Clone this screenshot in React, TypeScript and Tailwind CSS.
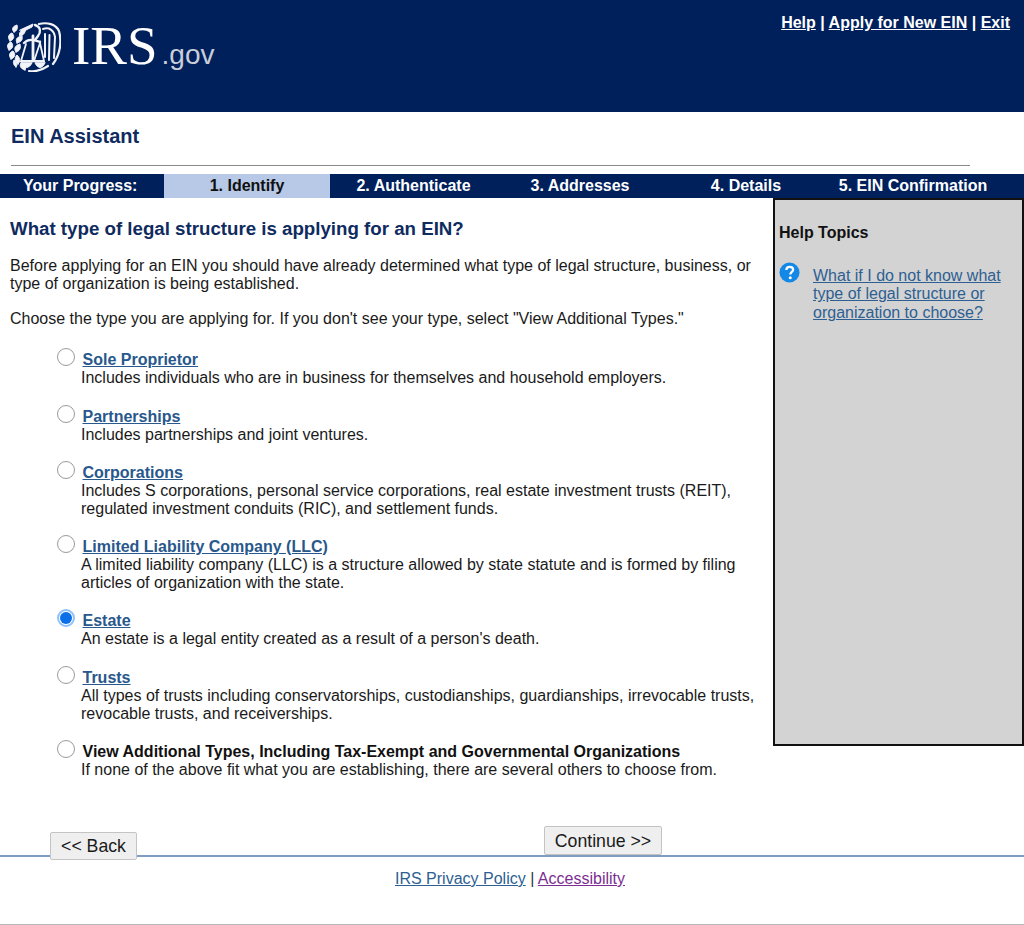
const font = 'font-["Liberation_Sans",Arial,sans-serif]';

type Option = {
  label: string;
  link?: boolean;
  checked?: boolean;
  lines: string[];
  className: string;
};

const options: Option[] = [
  {
    label: 'Sole Proprietor',
    link: true,
    lines: ['Includes individuals who are in business for themselves and household employers.'],
    className: 'mt-[23px]',
  },
  {
    label: 'Partnerships',
    link: true,
    lines: ['Includes partnerships and joint ventures.'],
    className: 'mt-[21px]',
  },
  {
    label: 'Corporations',
    link: true,
    lines: [
      'Includes S corporations, personal service corporations, real estate investment trusts (REIT),',
      'regulated investment conduits (RIC), and settlement funds.',
    ],
    className: 'mt-[20px]',
  },
  {
    label: 'Limited Liability Company (LLC)',
    link: true,
    lines: [
      'A limited liability company (LLC) is a structure allowed by state statute and is formed by filing',
      'articles of organization with the state.',
    ],
    className: 'mt-[20px]',
  },
  {
    label: 'Estate',
    link: true,
    checked: true,
    lines: ["An estate is a legal entity created as a result of a person's death."],
    className: 'mt-[20px]',
  },
  {
    label: 'Trusts',
    link: true,
    lines: [
      'All types of trusts including conservatorships, custodianships, guardianships, irrevocable trusts,',
      'revocable trusts, and receiverships.',
    ],
    className: 'mt-[21px]',
  },
  {
    label: 'View Additional Types, Including Tax-Exempt and Governmental Organizations',
    lines: ['If none of the above fit what you are establishing, there are several others to choose from.'],
    className: 'mt-[20px]',
  },
];

const Seal = () => (
  <svg viewBox="0 0 54 50" className="w-[54px] h-[50px] shrink-0" fill="#f1f3f8" stroke="#f1f3f8" strokeLinecap="round">
    {/* wreath */}
    <path d="M13 8 L26 2 L25 5 L15 10Z" strokeWidth="1" />
    <path d="M7 10 C4 7 6 4 10 3 C11 6 10 9 7 10Z" strokeWidth="1" />
    <path d="M13 14 C11 11 14 8 19 7 C18 11 16 14 13 14Z" strokeWidth="1" />
    <path d="M3 19 C0 15 2 12 5 11 C8 14 7 18 3 19Z" strokeWidth="1" />
    <path d="M10 21 C8 17 10 15 15 14 C16 18 14 20 10 21Z" strokeWidth="1" />
    <path d="M2 28 C-1 24 1 21 4 20 C7 23 6 27 2 28Z" strokeWidth="1" />
    <path d="M9 30 C6 26 9 23 13 22 C14 26 13 29 9 30Z" strokeWidth="1" />
    <path d="M4 37 C1 33 3 30 6 29 C9 32 8 36 4 37Z" strokeWidth="1" />
    <path d="M11 42 C8 40 7 36 10 33 C13 36 14 39 11 42Z" strokeWidth="1" />
    <path d="M9 45 C6 43 6 40 7 38 C10 40 11 43 9 45Z" strokeWidth="1" />
    <path d="M18 48 C14 47 12 44 14 41 C18 42 20 45 18 48Z" strokeWidth="1" />
    {/* eagle wing */}
    <g fill="none">
      <path d="M32 2 C40 0 49 2 52 9 C55 20 53 33 46 42" strokeWidth="2.2" />
      <path d="M36 7 C42 5 47 8 48 15 L47 36" strokeWidth="2" />
      <path d="M42.500 13 L42 38" strokeWidth="2" />
      <path d="M38 12 L38 35" strokeWidth="2" />
      {/* eagle head and beam */}
      <path d="M28 3 C34 5 34 10 31 14 L28 18" strokeWidth="2.4" />
      <path d="M17 21 C22 16 27 18 33 20" strokeWidth="2.4" />
      <path d="M26 14 L26 39" strokeWidth="2.8" />
      {/* scales */}
      <path d="M19 22 L14 39 H25" strokeWidth="1.8" />
      <path d="M33 21 L37 39 H27 L33 21Z" strokeWidth="1.8" />
      <path d="M22 49 C28 50 35 48 41 44" strokeWidth="2.2" />
    </g>
    <path d="M14 41 C17 47 22 47 25 41Z" strokeWidth="1" />
    <path d="M28 41 C31 47 35 47 38 41Z" strokeWidth="1" />
  </svg>
);

const Radio = ({ checked }: { checked?: boolean }) =>
  checked ? (
    <span className="block w-[18px] h-[18px] rounded-full border-2 border-[#8fc1fb] bg-white p-[1px] shrink-0">
      <span className="block w-full h-full rounded-full bg-[#0a6fe8]" />
    </span>
  ) : (
    <span className="block w-[18px] h-[18px] rounded-full border border-[#9a9a9a] bg-white shrink-0" />
  );

const steps = [
  { label: '1. Identify', className: 'w-[166px] bg-[#b7c9e6] text-[#101010]' },
  { label: '2. Authenticate', className: 'w-[167px] text-white' },
  { label: '3. Addresses', className: 'w-[166px] text-white' },
  { label: '4. Details', className: 'w-[166px] text-white' },
  { label: '5. EIN Confirmation', className: 'w-[168px] text-white whitespace-nowrap' },
];

const App = () => {
  return (
    <div className={`w-[1024px] h-[925px] overflow-hidden bg-white text-[#1a1a1a] text-[16px] leading-[18px] ${font}`}>
      <header className="h-[112px] bg-[#00205c] flex justify-between items-start">
        <div className="flex items-start pl-[7px] pt-[22px]">
          <Seal />
          <span className='ml-[11px] mt-[-6px] text-[55px] leading-[60px] text-white font-["Liberation_Serif",serif]'>IRS</span>
          <span className="ml-[4px] mt-[15px] text-[28px] leading-[36px] text-[#c9ced8]">.gov</span>
        </div>
        <div className="pt-[14px] pr-[14px] text-[16px] font-bold text-white">
          <a href="#" className="underline">Help</a> | <a href="#" className="underline">Apply for New EIN</a> | <a href="#" className="underline">Exit</a>
        </div>
      </header>

      <div className="h-[62px] pl-[11px] pt-[13px]">
        <h1 className="text-[20px] leading-[23px] font-bold text-[#0f2b60]">EIN Assistant</h1>
        <div className="mt-[17px] w-[959px] border-t border-[#8a8a8a]" />
      </div>

      <nav className="h-[24px] bg-[#00205c] flex text-[16px] leading-[24px] font-bold">
        <div className="w-[164px] pl-[23px] text-white">Your Progress:</div>
        {steps.map((step) => (
          <div key={step.label} className={`text-center ${step.className}`}>{step.label}</div>
        ))}
      </nav>

      <div className="flex items-start h-[628px]">
        <main className="w-[773px] pl-[10px]">
          <h2 className="mt-[20px] text-[18.7px] leading-[22px] font-bold text-[#0f2b60]">What type of legal structure is applying for an EIN?</h2>
          <p className="mt-[17px]">
            Before applying for an EIN you should have already determined what type of legal structure, business, or<br />
            type of organization is being established.
          </p>
          <p className="mt-[17px]">Choose the type you are applying for. If you don't see your type, select "View Additional Types."</p>
          {options.map((option) => (
            <div key={option.label} className={`flex pl-[47px] ${option.className}`}>
              <div className="w-[24px] mt-[-3px]"><Radio checked={option.checked} /></div>
              <div>
                <div className="pl-[1.5px] text-[16px]">
                  {option.link ? (
                    <a href="#" className="font-bold text-[#28588c] underline">{option.label}</a>
                  ) : (
                    <span className="font-bold text-[#111]">{option.label}</span>
                  )}
                </div>
                {option.lines.map((line) => (
                  <div key={line} className="whitespace-nowrap">{line}</div>
                ))}
              </div>
            </div>
          ))}
        </main>
        <aside className="w-[251px] h-[548px] bg-[#d3d3d3] border-2 border-[#111] pl-[4px] pt-[23px]">
          <h3 className="text-[16px] leading-[20px] font-bold text-[#111]">Help Topics</h3>
          <div className="mt-[19px] flex">
            <svg viewBox="0 0 22 22" className="w-[21px] h-[21px] shrink-0">
              <circle cx="11" cy="11" r="10.5" fill="#1488e6" />
              <path d="M7.6 8.4 C7.8 5.9 9.4 5 11.2 5 C13.2 5 14.8 6.2 14.8 8 C14.8 10.4 11.9 10.4 11.9 13" fill="none" stroke="#fff" strokeWidth="2.4" />
              <circle cx="11.8" cy="16.4" r="1.6" fill="#fff" />
            </svg>
            <a href="#" className="ml-[13px] mt-[5px] leading-[18.4px] text-[#2e5f92] underline whitespace-nowrap">
              What if I do not know what<br />type of legal structure or<br />organization to choose?
            </a>
          </div>
        </aside>
      </div>

      <div className="relative flex h-[29px]">
        <button className="absolute left-[50px] top-[6px] w-[87px] h-[28px] bg-[#efefef] border border-[#c4c4c4] rounded-[2px] text-[17.7px] text-[#1a1a1a] z-10">&lt;&lt; Back</button>
        <button className="absolute left-[544px] top-0 w-[118px] h-[29px] bg-[#efefef] border border-[#c4c4c4] rounded-[2px] text-[17.7px] text-[#1a1a1a]">Continue &gt;&gt;</button>
      </div>
      <footer className="border-t-2 border-[#7f9dc0] h-[69px] text-center pt-[13px] pr-[4px] text-[16px] text-[#333]">
        <a href="#" className="text-[#2e5f92] underline">IRS Privacy Policy</a> | <a href="#" className="text-[#7b2d91] underline">Accessibility</a>
      </footer>
      <div className="border-t border-[#b8b8b8]" />
    </div>
  );
};

export default App;
